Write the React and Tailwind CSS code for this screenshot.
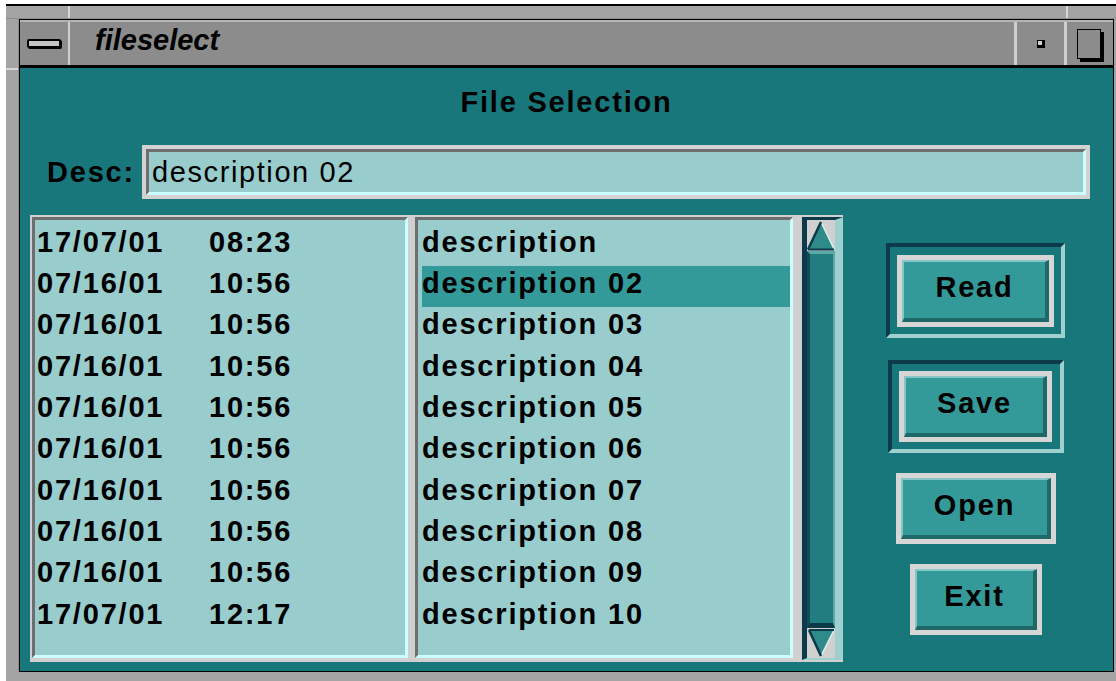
import React from "react";

const ROWS = [
  { date: "17/07/01", time: "08:23", desc: "description" },
  { date: "07/16/01", time: "10:56", desc: "description 02" },
  { date: "07/16/01", time: "10:56", desc: "description 03" },
  { date: "07/16/01", time: "10:56", desc: "description 04" },
  { date: "07/16/01", time: "10:56", desc: "description 05" },
  { date: "07/16/01", time: "10:56", desc: "description 06" },
  { date: "07/16/01", time: "10:56", desc: "description 07" },
  { date: "07/16/01", time: "10:56", desc: "description 08" },
  { date: "07/16/01", time: "10:56", desc: "description 09" },
  { date: "17/07/01", time: "12:17", desc: "description 10" },
];

const SELECTED = 1;

// sunken Motif-style panel
function Inset({ className = "", children }) {
  return (
    <div
      className={
        "border-[3px] border-t-[#6e6e6e] border-l-[#6e6e6e] border-r-[#ccffff] border-b-[#ccffff] bg-[#99cccc] " +
        className
      }
    >
      {children}
    </div>
  );
}

function Button({ label, className = "" }) {
  return (
    <div className={"border-[5px] border-[#d6d6d6] " + className}>
      <div className="flex h-full items-center justify-center border-t-2 border-l-2 border-r-4 border-b-4 border-t-[#86c6c6] border-l-[#86c6c6] border-r-[#1f6868] border-b-[#1f6868] bg-[#339999] pb-[5px] text-[29px] font-bold leading-none tracking-[1.8px] text-black">
        {label}
      </div>
    </div>
  );
}

// dark ring drawn around the default buttons
function DefaultRing({ className = "", children }) {
  return (
    <div
      className={
        "flex items-center justify-center border-4 border-t-[#0c3a4a] border-l-[#0c3a4a] border-r-[#9fd0d0] border-b-[#9fd0d0] " +
        className
      }
    >
      {children}
    </div>
  );
}

function ScrollBar() {
  return (
    <div className="ml-[9px] flex h-[443px] w-[41px] flex-col border-t-[3px] border-l-[5px] border-r-[8px] border-b-[2px] border-t-[#0c3a4a] border-l-[#0c3a4a] border-r-[#9fd0d0] border-b-[#9fd0d0]">
      <div className="h-[31px] bg-[#d0d0d0]">
        <svg width="28" height="31" viewBox="0 0 28 31">
          <polygon points="14,2 27,29 1,29" fill="#2f8a8a" />
          <polyline points="27,29 14,2" fill="none" stroke="#d8f0f0" strokeWidth="1.5" />
          <polyline points="1,29.5 14,2 " fill="none" stroke="#0c3a4a" strokeWidth="2.5" />
          <line x1="1" y1="29.5" x2="27" y2="29.5" stroke="#0c3a4a" strokeWidth="2" />
        </svg>
      </div>
      <div className="flex-1 border-t-[3px] border-l-[3px] border-r-[2px] border-b-[5px] border-t-[#5aa8a8] border-l-[#0f4d5a] border-r-[#5aa8a8] border-b-[#0c3a4a] bg-[#227d7f]" />
      <div className="h-[30px] bg-[#d0d0d0]">
        <svg width="28" height="30" viewBox="0 0 28 30">
          <polygon points="2,2 27,2 14,28" fill="#2f8a8a" />
          <polyline points="27,2 14,28" fill="none" stroke="#d8f0f0" strokeWidth="1.5" />
          <polyline points="2,2 14,28" fill="none" stroke="#0c3a4a" strokeWidth="2.5" />
          <line x1="2" y1="2" x2="27" y2="2" stroke="#0c3a4a" strokeWidth="2" />
        </svg>
      </div>
    </div>
  );
}

function TitleBar() {
  return (
    <div className="flex h-[48px] border-t-2 border-b-[3px] border-t-[#b4b4b4] border-b-black bg-[#8c8c8c]">
      <div className="flex w-[48px] items-center justify-center">
        <div className="h-[9px] w-[34px] rounded-[2px] border-2 border-black bg-[#c4c4c4] shadow-[1px_1px_0_#000]" />
      </div>
      <div className="w-[2px] bg-[#cfcfcf]" />
      <div className="flex flex-1 items-center pb-[6px] pl-[25px] text-[29px] font-bold italic leading-none text-black">
        fileselect
      </div>
      <div className="w-[3px] bg-[#cfcfcf]" />
      <div className="flex w-[47px] items-center justify-center">
        <div className="h-[8px] w-[8px] border-t border-l border-r-[3px] border-b-[3px] border-black bg-[#d0d0d0]" />
      </div>
      <div className="w-[3px] bg-[#cfcfcf]" />
      <div className="flex w-[46px] items-center justify-center pr-[2px]">
        <div className="h-[30px] w-[24px] border border-black bg-[#8c8c8c] shadow-[3px_3px_0_#000]" />
      </div>
    </div>
  );
}

function FileSelect() {
  return (
    <div className="h-[603px] overflow-hidden bg-[#17777b] text-black">
      <div className="pt-[20px] text-center text-[29px] font-bold leading-[29px] tracking-[1.8px]">
        File Selection
      </div>

      <div className="mt-[28px] flex h-[54px] items-center pl-[27px]">
        <div className="w-[95px] text-[29px] font-bold leading-[40px] tracking-[1.8px]">Desc:</div>
        <div className="h-[54px] w-[948px] border-4 border-[#d2d2d2]">
          <Inset className="h-full pl-[3px] text-[29px] leading-[40px] tracking-[1.6px]">
            {ROWS[SELECTED].desc}
          </Inset>
        </div>
      </div>

      <div className="mt-[16px] flex items-start pl-[10px]">
        <div className="flex h-[447px] w-[813px] items-start bg-[#d0d0d0] pt-[2px] pl-[2px]">
          <Inset className="h-[441px] w-[376px] pt-[4.7px] pl-[2px] text-[29px] font-bold tracking-[1.8px]">
            {ROWS.map((r, i) => (
              <div key={i} className="flex h-[41.33px] leading-[34px]">
                <span className="w-[172px]">{r.date}</span>
                <span>{r.time}</span>
              </div>
            ))}
          </Inset>
          <Inset className="ml-[7px] h-[441px] w-[378px] pt-[4.7px] pl-[4px] text-[29px] font-bold tracking-[1.8px]">
            {ROWS.map((r, i) => (
              <div
                key={i}
                className={"h-[41.33px] leading-[34px] " + (i === SELECTED ? "bg-[#339999]" : "")}
              >
                {r.desc}
              </div>
            ))}
          </Inset>
          <ScrollBar />
        </div>

        <div className="ml-[43px] flex w-[179px] flex-col items-center pt-[28px]">
          <DefaultRing className="h-[95px] w-[179px]">
            <Button label="Read" className="h-[72px] w-[157px]" />
          </DefaultRing>
          <DefaultRing className="mt-[22px] h-[93px] w-[176px]">
            <Button label="Save" className="h-[71px] w-[153px]" />
          </DefaultRing>
          <Button label="Open" className="mt-[20px] h-[71px] w-[160px]" />
          <Button label="Exit" className="mt-[20px] h-[71px] w-[132px]" />
        </div>
      </div>
    </div>
  );
}

export default function App() {
  return (
    <div className="h-[681px] w-[1116px] overflow-hidden bg-white pt-[4px] font-['Liberation_Sans']">
      <div className="ml-[6px] h-[677px] w-[1110px] border-t-2 border-black bg-[#a4a4a4]">
        {/* frame top edge with corner ticks */}
        <div className="flex h-[13px] border-b border-b-[#8e8e8e]">
          <div className="w-[62px]" />
          <div className="w-[2px] bg-[#d6d6d6]" />
          <div className="flex-1" />
          <div className="w-[2px] bg-[#d6d6d6]" />
          <div className="w-[48px]" />
        </div>
        <div className="flex">
          <div className="flex w-[13px] flex-col border-r border-r-[#8e8e8e]">
            <div className="h-[49px]" />
            <div className="h-[2px] bg-[#d6d6d6]" />
          </div>
          <div className="w-[1095px] border border-black">
            <TitleBar />
            <FileSelect />
          </div>
        </div>
      </div>
    </div>
  );
}
